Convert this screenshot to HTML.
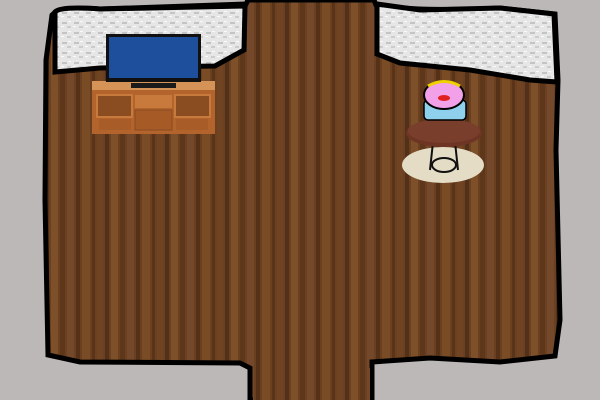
<!DOCTYPE html>
<html><head><style>html,body{margin:0;padding:0;background:#bdb8b8;}svg{display:block}</style></head>
<body>
<svg width="600" height="400" viewBox="0 0 600 400" xmlns="http://www.w3.org/2000/svg">
<defs>
<pattern id="wood" width="60" height="200" patternUnits="userSpaceOnUse">
<rect width="60" height="200" fill="#6a4020"/>
<rect x="0" width="5" height="200" fill="#5e371b"/>
<rect x="7" width="7" height="200" fill="#74482a"/>
<rect x="16" width="4" height="200" fill="#553118"/>
<rect x="22" width="8" height="200" fill="#7a4c26"/>
<rect x="32" width="3" height="200" fill="#5a3419"/>
<rect x="37" width="6" height="200" fill="#704422"/>
<rect x="45" width="4" height="200" fill="#52301a"/>
<rect x="51" width="7" height="200" fill="#7e5029"/>
</pattern>
<pattern id="wall" width="12" height="10" patternUnits="userSpaceOnUse">
<rect width="12" height="10" fill="#e6e6e6"/>
<rect x="2" y="2" width="5" height="2" fill="#c4c4c4"/>
<rect x="7" y="6" width="4" height="2" fill="#cccccc"/>
<rect x="1" y="6" width="3" height="1" fill="#fafafa"/>
<rect x="8" y="1" width="3" height="1" fill="#fafafa"/>
</pattern>
</defs>
<rect width="600" height="400" fill="#bdb8b8"/>
<path d="M52,15 Q60,6 100,9 L246,4 L248,0 L374,0 L376,5 Q420,12 500,8 L555,14 L558,80 L556,150 L560,320 L555,356 L500,362 L430,358 L372,362 L372,400 L250,400 L250,368 L240,363 L80,362 L48,355 L45,200 L46,60 Z" fill="url(#wood)" stroke="#000" stroke-width="5"/>
<path d="M55,12 Q60,6 100,9 L245,6 L244,50 L215,66 L100,68 L55,72 Z" fill="url(#wall)" stroke="#000" stroke-width="5"/>
<path d="M377,4 L420,10 L500,8 L554,14 L557,82 L530,80 L470,70 L400,63 L377,54 Z" fill="url(#wall)" stroke="#000" stroke-width="5"/>
<rect x="253" y="368" width="117" height="32" fill="url(#wood)"/>
<!-- TV stand -->
<rect x="92" y="81" width="123" height="53" fill="#b3642c"/>
<rect x="92" y="81" width="123" height="9" fill="#d59358"/>
<rect x="97" y="95" width="35" height="22" fill="#8a4d22" stroke="#c87a3c" stroke-width="2"/>
<rect x="175" y="95" width="35" height="22" fill="#8a4d22" stroke="#c87a3c" stroke-width="2"/>
<rect x="135" y="95" width="37" height="13" fill="#c87a3c"/>
<rect x="135" y="110" width="37" height="20" fill="#a65a26" stroke="#8a4a20"/>
<rect x="99" y="119" width="32" height="11" fill="#a85c28"/>
<rect x="176" y="119" width="32" height="11" fill="#a85c28"/>
<!-- TV -->
<rect x="106" y="34" width="95" height="48" fill="#111"/>
<rect x="109" y="37" width="89" height="41" fill="#1d4f9c"/>
<rect x="131" y="83" width="45" height="5" fill="#1a1a1a"/>
<!-- rug & table -->
<ellipse cx="443" cy="165" rx="41" ry="18" fill="#e4dcc5"/>
<path d="M433,142 L430,170 M455,142 L458,170" stroke="#111" stroke-width="2"/>
<ellipse cx="444" cy="165" rx="12" ry="7" fill="none" stroke="#111" stroke-width="2"/>
<ellipse cx="444" cy="133" rx="38" ry="14" fill="#6e3424"/>
<ellipse cx="444" cy="131" rx="36" ry="12" fill="#7a3f2c"/>
<!-- character -->
<rect x="424" y="100" width="42" height="20" rx="4" fill="#8fd0ec" stroke="#000" stroke-width="1.5"/>
<ellipse cx="444" cy="95" rx="20" ry="14" fill="#f2a0e8" stroke="#000" stroke-width="2"/>
<path d="M428,86 Q444,77 460,86" stroke="#f0d000" stroke-width="3" fill="none"/>
<ellipse cx="444" cy="98" rx="6" ry="3" fill="#e02020"/>
</svg>
</body></html>
